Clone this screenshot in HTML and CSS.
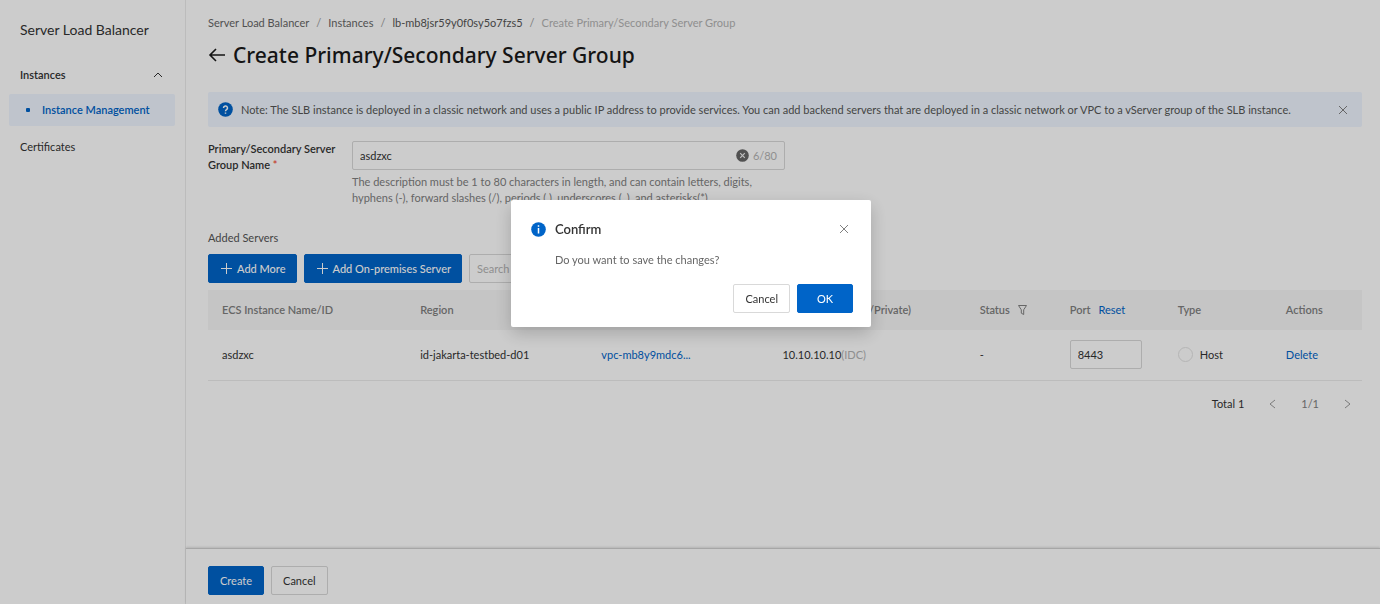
FILE: index.html
```html
<!DOCTYPE html>
<html lang="en">
<head>
    <meta charset="UTF-8">
    <title>Create Primary/Secondary Server Group</title>
    <link rel="stylesheet" href="styles.css">
</head>
<body>
<div class="layout">
    <aside class="sidebar">
        <h2 class="sidebar-title">Server Load Balancer</h2>
        <nav class="menu">
            <button class="menu-group" type="button" aria-expanded="true">
                Instances
                <svg width="10" height="6" viewBox="0 0 10 6"><path d="M1 5l4-4 4 4"/></svg>
            </button>
            <a class="menu-item active" href="#">Instance Management</a>
            <a class="menu-link" href="#">Certificates</a>
        </nav>
    </aside>

    <div class="page">
        <main class="content">
            <nav class="breadcrumb">
                <a href="#">Server Load Balancer</a>
                <span class="slash">/</span>
                <a href="#">Instances</a>
                <span class="slash">/</span>
                <a class="dark" href="#">lb-mb8jsr59y0f0sy5o7fzs5</a>
                <span class="slash">/</span>
                <span class="current">Create Primary/Secondary Server Group</span>
            </nav>
            <div class="heading">
                <a class="back" href="#" aria-label="Back">
                    <svg width="18" height="14" viewBox="0 0 18 14"><path d="M17 7H2M8 1L2 7l6 6"/></svg>
                </a>
                <h1>Create Primary/Secondary Server Group</h1>
            </div>

            <div class="notice">
                <svg class="badge" width="15" height="15" viewBox="0 0 15 15">
                    <circle cx="7.5" cy="7.5" r="7.3"/>
                    <path d="M5.5 6a2 2 0 1 1 3 1.7c-.7.4-1 .7-1 1.5M7.5 10.4v1.4"/>
                </svg>
                <p>Note: The SLB instance is deployed in a classic network and uses a public IP address to provide services. You can add backend servers that are deployed in a classic network or VPC to a vServer group of the SLB instance.</p>
                <button class="close" type="button" aria-label="Close">
                    <svg width="10" height="10" viewBox="0 0 10 10"><path d="M1 1l8 8M9 1L1 9"/></svg>
                </button>
            </div>

            <div class="field">
                <label for="group-name">Primary/Secondary Server Group Name <span class="required">*</span></label>
                <div class="field-control">
                    <div class="input-box">
                        <input type="text" id="group-name" value="asdzxc" maxlength="80">
                        <button class="clear" type="button" aria-label="Clear">
                            <svg width="13" height="13" viewBox="0 0 13 13">
                                <circle cx="6.5" cy="6.5" r="6.3"/>
                                <path d="M4.2 4.2l4.6 4.6M8.8 4.2L4.2 8.8"/>
                            </svg>
                        </button>
                        <span class="counter">6/80</span>
                    </div>
                    <p class="help">The description must be 1 to 80 characters in length, and can contain letters, digits, hyphens (-), forward slashes (/), periods (.), underscores (_), and asterisks(*).</p>
                </div>
            </div>

            <h3 class="section-title">Added Servers</h3>
            <div class="toolbar">
                <button class="btn primary with-icon" type="button">
                    <svg width="11" height="11" viewBox="0 0 11 11"><path d="M5.5 0v11M0 5.5h11"/></svg>
                    Add More
                </button>
                <button class="btn primary with-icon" type="button">
                    <svg width="11" height="11" viewBox="0 0 11 11"><path d="M5.5 0v11M0 5.5h11"/></svg>
                    Add On-premises Server
                </button>
                <input class="search" type="text" placeholder="Search" aria-label="Search">
            </div>

            <table class="servers">
                <colgroup>
                    <col class="col-name">
                    <col class="col-region">
                    <col class="col-vpc">
                    <col class="col-ip">
                    <col class="col-status">
                    <col class="col-port">
                    <col class="col-type">
                    <col class="col-actions">
                </colgroup>
                <thead>
                <tr>
                    <th>ECS Instance Name/ID</th>
                    <th>Region</th>
                    <th>VPC</th>
                    <th>IP Address (Public/Private)</th>
                    <th>
                        <span class="th-inner">Status
                            <svg width="9" height="10" viewBox="0 0 9 10"><path d="M.5.5h8L5.7 4.8v4.7L3.3 8.2V4.8z"/></svg>
                        </span>
                    </th>
                    <th><span class="th-inner">Port <a href="#">Reset</a></span></th>
                    <th>Type</th>
                    <th>Actions</th>
                </tr>
                </thead>
                <tbody>
                <tr>
                    <td>asdzxc</td>
                    <td>id-jakarta-testbed-d01</td>
                    <td><a href="#">vpc-mb8y9mdc6...</a></td>
                    <td>10.10.10.10<span class="muted">(IDC)</span></td>
                    <td>-</td>
                    <td><input class="port" type="text" value="8443" aria-label="Port"></td>
                    <td><label class="radio"><input type="radio" name="type" disabled>Host</label></td>
                    <td><a href="#">Delete</a></td>
                </tr>
                </tbody>
            </table>

            <div class="pagination">
                <span class="total">Total 1</span>
                <button type="button" aria-label="Previous">
                    <svg width="7" height="10" viewBox="0 0 7 10"><path d="M6 1L1 5l5 4"/></svg>
                </button>
                <span class="pages">1/1</span>
                <button type="button" aria-label="Next">
                    <svg width="7" height="10" viewBox="0 0 7 10"><path d="M1 1l5 4-5 4"/></svg>
                </button>
            </div>
        </main>

        <footer class="footer">
            <button class="btn primary" type="button">Create</button>
            <button class="btn" type="button">Cancel</button>
        </footer>
    </div>
</div>

<div class="overlay">
    <div class="dialog" role="dialog" aria-labelledby="dialog-title">
        <div class="dialog-head">
            <svg class="badge" width="15" height="15" viewBox="0 0 15 15">
                <circle cx="7.5" cy="7.5" r="7.3"/>
                <path d="M7.5 3.2v1.5M7.5 6v5.6"/>
            </svg>
            <h2 id="dialog-title">Confirm</h2>
            <button class="close" type="button" aria-label="Close">
                <svg width="10" height="10" viewBox="0 0 10 10"><path d="M1 1l8 8M9 1L1 9"/></svg>
            </button>
        </div>
        <p class="dialog-text">Do you want to save the changes?</p>
        <div class="dialog-actions">
            <button class="btn" type="button">Cancel</button>
            <button class="btn primary" type="button">OK</button>
        </div>
    </div>
</div>
</body>
</html>
```

FILE: styles.css
```css
* {
    box-sizing: border-box;
}

body {
    margin: 0;
    font-family: "Segoe UI", Lato, "Open Sans", sans-serif;
    font-size: 11px;
    line-height: 16px;
    color: #333;
    background: #fff;
}

h1, h2, h3, p {
    margin: 0;
}

a {
    color: #0064c8;
    text-decoration: none;
}

button, input {
    font: inherit;
    color: inherit;
}

button {
    padding: 0;
    border: 0;
    background: none;
}

svg {
    display: block;
    flex: none;
    fill: none;
    stroke: currentColor;
}

.layout {
    display: flex;
    min-height: 100vh;
}

/* sidebar */

.sidebar {
    flex: none;
    width: 186px;
    padding: 20px 10px 0 9px;
    border-right: 1px solid #ebebeb;
}

.sidebar-title {
    padding-left: 11px;
    font-size: 14px;
    font-weight: 400;
    line-height: 20px;
}

.menu {
    display: flex;
    flex-direction: column;
    margin-top: 16px;
}

.menu-group {
    display: flex;
    align-items: center;
    justify-content: space-between;
    height: 38px;
    padding: 0 12px 0 11px;
    font-weight: 600;
}

.menu-item {
    display: flex;
    align-items: center;
    height: 32px;
    padding-left: 17px;
    border-radius: 2px;
    font-weight: 600;
}

.menu-item.active {
    background: #eff6ff;
}

.menu-item::before {
    content: "";
    width: 4px;
    height: 4px;
    margin-right: 12px;
    border-radius: 1px;
    background: #0064c8;
}

.menu-link {
    padding: 13px 11px;
    color: #333;
}

/* page */

.page {
    display: flex;
    flex: 1;
    flex-direction: column;
    min-width: 0;
}

.content {
    flex: 1;
    padding: 15px 18px 0 22px;
}

.breadcrumb {
    display: flex;
    gap: 7px;
}

.breadcrumb a {
    color: #666;
}

.breadcrumb a.dark {
    color: #555;
}

.breadcrumb .slash {
    color: #999;
}

.breadcrumb .current {
    color: #b3b3b3;
}

.heading {
    display: flex;
    align-items: center;
    gap: 7px;
    margin-top: 10px;
}

.heading h1 {
    font-family: "Segoe UI", "Noto Sans", sans-serif;
    font-size: 21px;
    font-weight: 500;
    line-height: 28px;
    color: #1a1a1a;
}

.back {
    color: #1a1a1a;
}

.back svg {
    stroke-width: 1.6;
}

.notice {
    display: flex;
    align-items: center;
    min-height: 35px;
    margin-top: 23px;
    padding: 0 14px 0 10px;
    border-radius: 2px;
    background: #eff6ff;
    color: #555;
}

.notice p {
    flex: 1;
    margin-left: 8px;
}

.badge circle {
    fill: #0064c8;
    stroke: none;
}

.badge path {
    stroke: #fff;
    stroke-width: 1.5;
}

.close {
    color: #808080;
}

.field {
    display: flex;
    margin-top: 14px;
}

.field label {
    width: 144px;
    padding-right: 8px;
    font-weight: 600;
}

.required {
    color: #f5503c;
}

.field-control {
    width: 433px;
}

.input-box {
    display: flex;
    align-items: center;
    height: 29px;
    padding: 0 7px;
    border: 1px solid #d9d9d9;
    border-radius: 2px;
}

.input-box input {
    flex: 1;
    min-width: 0;
    padding: 0;
    border: 0;
    outline: 0;
    background: none;
}

.clear circle {
    fill: #666;
    stroke: none;
}

.clear path {
    stroke: #eee;
    stroke-width: 1.2;
}

.counter {
    margin-left: 4px;
    color: #b3b3b3;
}

.help {
    max-width: 410px;
    margin-top: 4px;
    color: #808080;
}

.section-title {
    margin-top: 24px;
    font-size: 11px;
    font-weight: 400;
    color: #555;
}

.toolbar {
    display: flex;
    gap: 7px;
    margin-top: 8px;
}

.btn {
    height: 29px;
    padding: 0 11px;
    border: 1px solid #d9d9d9;
    border-radius: 2px;
    background: #fff;
    color: #333;
}

.btn.primary {
    border-color: #0064c8;
    background: #0064c8;
    color: #fff;
}

.btn.with-icon {
    display: flex;
    align-items: center;
    gap: 5px;
    padding: 0 10px 0 12px;
    font-weight: 500;
}

.search {
    width: 220px;
    height: 29px;
    padding: 0 7px;
    border: 1px solid #d9d9d9;
    border-radius: 2px;
}

.search::placeholder {
    color: #b3b3b3;
}

/* table */

.servers {
    width: 100%;
    margin-top: 7px;
    border-collapse: collapse;
    table-layout: fixed;
}

.col-name {
    width: 198px;
}

.col-region, .col-vpc {
    width: 181px;
}

.col-ip {
    width: 197px;
}

.col-status, .col-actions {
    width: 90px;
}

.col-port, .col-type {
    width: 108px;
}

.servers th, .servers td {
    padding: 0 14px;
    text-align: left;
    white-space: nowrap;
}

.servers th {
    height: 40px;
    background: #f7f7f7;
    font-weight: 600;
    color: #808080;
}

.servers th a {
    font-weight: 400;
}

.servers td {
    height: 50px;
    border-bottom: 1px solid #ebebeb;
}

.th-inner {
    display: flex;
    align-items: center;
    gap: 8px;
}

.muted {
    color: #b3b3b3;
}

.port {
    display: block;
    width: 72px;
    height: 29px;
    padding: 0 7px;
    border: 1px solid #d9d9d9;
    border-radius: 2px;
}

.radio {
    display: flex;
    align-items: center;
    gap: 7px;
}

.radio input {
    width: 15px;
    height: 15px;
    margin: 0;
    border: 1px solid #e3e3e3;
    border-radius: 50%;
    appearance: none;
}

.pagination {
    display: flex;
    align-items: center;
    justify-content: flex-end;
    margin-top: 15px;
    padding-right: 11px;
    color: #808080;
}

.pagination .total {
    margin-right: 25px;
    color: #333;
}

.pagination button {
    color: #999;
}

.pagination .pages {
    margin: 0 25px;
}

.footer {
    display: flex;
    gap: 7px;
    padding: 17px 22px 9px;
    border-top: 1px solid #d0d0d0;
    box-shadow: 0 -1px 2px rgba(0, 0, 0, 0.12);
}

/* dialog */

.overlay {
    position: fixed;
    inset: 0;
    display: flex;
    align-items: flex-start;
    justify-content: center;
    padding: 200px 0 0 2px;
    background: rgba(0, 0, 0, 0.2);
}

.dialog {
    width: 360px;
    padding: 19px 18px 14px 20px;
    border-radius: 2px;
    background: #fff;
    box-shadow: 0 6px 18px rgba(0, 0, 0, 0.2);
}

.dialog-head {
    display: flex;
    align-items: center;
}

.dialog-head h2 {
    flex: 1;
    margin-left: 9px;
    font-size: 13px;
    font-weight: 600;
    line-height: 20px;
}

.dialog-head .close {
    margin-right: 4px;
}

.dialog-text {
    margin: 13px 0 16px 24px;
    color: #666;
}

.dialog-actions {
    display: flex;
    justify-content: flex-end;
    gap: 7px;
}

.dialog-actions .btn {
    min-width: 56px;
}
```
